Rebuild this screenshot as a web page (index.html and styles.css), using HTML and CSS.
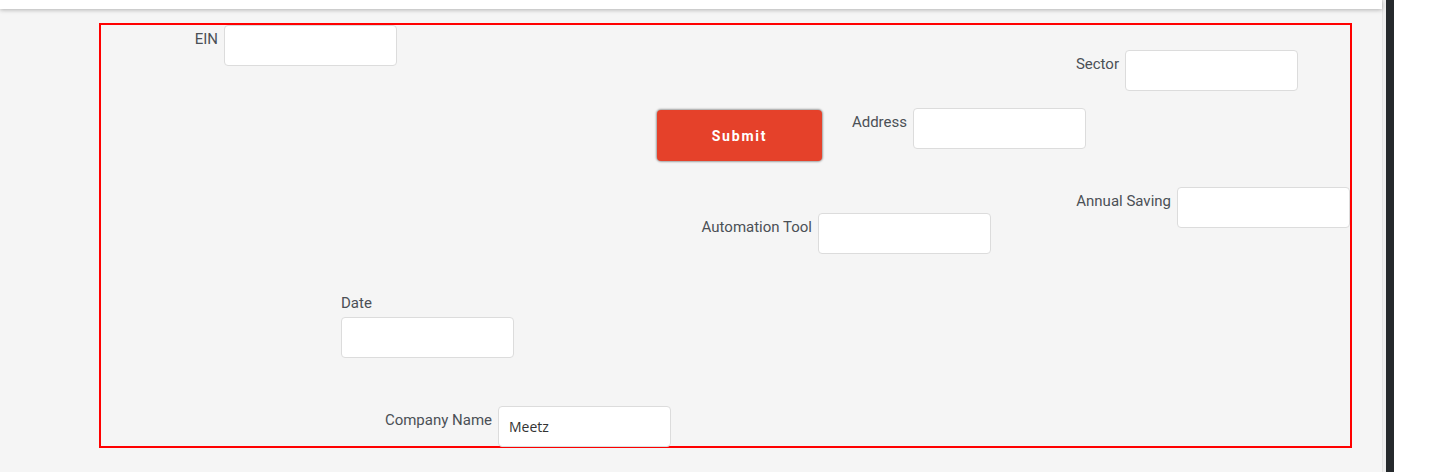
FILE: index.html
```html
<!DOCTYPE html>
<html lang="en">
<head>
<meta charset="utf-8">
<title>Form canvas</title>
<link rel="stylesheet" href="styles.css">
</head>
<body>
<div class="app">
  <main class="main">
    <div class="topbar"></div>
    <form class="canvas">
      <div class="field f-ein">
        <label class="lbl" for="ein">EIN</label>
        <input class="inp" id="ein" type="text">
      </div>
      <div class="field f-sector">
        <label class="lbl" for="sector">Sector</label>
        <input class="inp" id="sector" type="text">
      </div>
      <button class="submit" type="button">Submit</button>
      <div class="field f-address">
        <label class="lbl" for="address">Address</label>
        <input class="inp" id="address" type="text">
      </div>
      <div class="field f-saving">
        <label class="lbl" for="saving">Annual Saving</label>
        <input class="inp" id="saving" type="text">
      </div>
      <div class="field f-tool">
        <label class="lbl" for="tool">Automation Tool</label>
        <input class="inp" id="tool" type="text">
      </div>
      <div class="field stacked f-date">
        <label class="lbl" for="date">Date</label>
        <input class="inp" id="date" type="text">
      </div>
      <div class="field f-company">
        <label class="lbl" for="company">Company Name</label>
        <input class="inp" id="company" type="text" value="Meetz">
      </div>
    </form>
  </main>
  <div class="edge"></div>
  <div class="dark"></div>
  <div class="rest"></div>
</div>
</body>
</html>
```

FILE: styles.css
```css
* { box-sizing: border-box; }

html, body {
  margin: 0;
  height: 100%;
  background: #ffffff;
  font-family: Roboto, "Liberation Sans", Arial, sans-serif;
}

.app {
  display: flex;
  height: 472px;
  overflow: hidden;
}

.main {
  width: 1382px;
  flex: none;
  background: #f5f5f5;
  display: flex;
  flex-direction: column;
}

.topbar {
  height: 9px;
  background: #ffffff;
  box-shadow: 0 1px 4px rgba(0, 0, 0, 0.28);
  position: relative;
  z-index: 1;
}

.edge {
  width: 4px;
  flex: none;
  background: #eeeeee;
  border-left: 1px solid #e4e4e4;
}

.dark {
  width: 8px;
  flex: none;
  background: #25292c;
}

.rest {
  flex: 1;
  background: #ffffff;
}

.canvas {
  position: relative;
  margin: 14px 0 0 99px;
  width: 1253px;
  height: 425px;
  border: 2px solid #ff0000;
}

.field {
  position: absolute;
  display: flex;
  align-items: flex-start;
  gap: 6px;
}

.field.stacked {
  flex-direction: column;
  gap: 5px;
}

.lbl {
  font-size: 15px;
  line-height: 18px;
  color: #4b5056;
  padding-top: 5px;
  white-space: nowrap;
}

.stacked .lbl { padding-top: 0; }

.inp {
  width: 173px;
  height: 41px;
  border: 1px solid #dcdcdc;
  border-radius: 4px;
  background: #ffffff;
  padding: 0 10px;
  font-family: "Open Sans", "Liberation Sans", sans-serif;
  font-size: 14px;
  color: #333333;
  outline: none;
}

.f-ein { top: 0; right: 953px; }
.f-sector { top: 25px; right: 52px; }
.f-address { top: 83px; right: 264px; }
.f-saving { top: 162px; right: 0; }
.f-tool { top: 188px; right: 359px; }
.f-company { top: 381px; right: 679px; }
.f-date { top: 269px; left: 240px; }

.submit {
  position: absolute;
  left: 556px;
  top: 85px;
  width: 165px;
  height: 51px;
  background: #e5412a;
  border: none;
  border-radius: 4px;
  box-shadow: 0 0 2px 1px rgba(0, 0, 0, 0.35);
  color: #ffffff;
  font-family: Roboto, "Liberation Sans", sans-serif;
  font-weight: 700;
  font-size: 14px;
  letter-spacing: 1.8px;
  cursor: pointer;
}
```
